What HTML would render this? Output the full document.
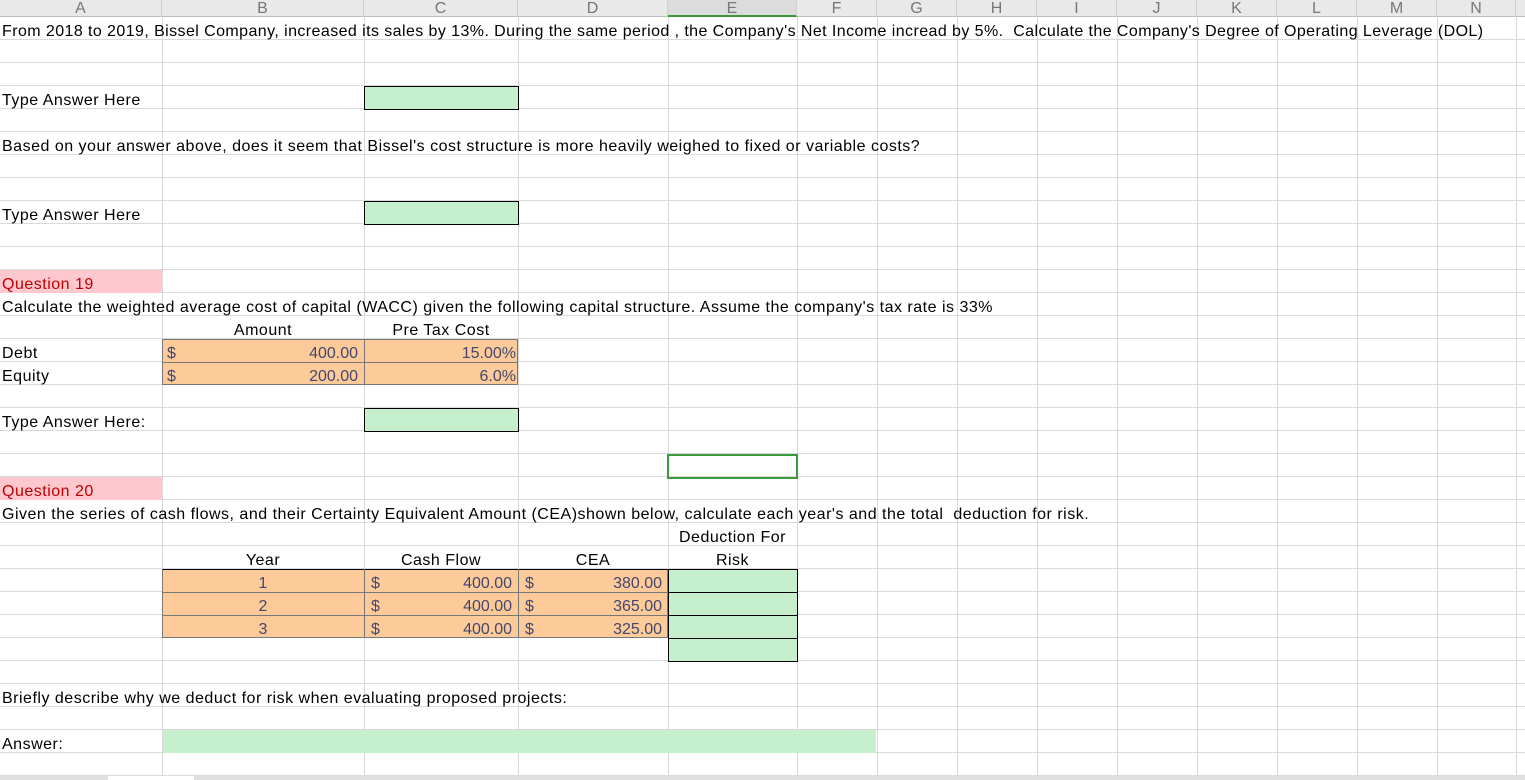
<!DOCTYPE html>
<html><head><meta charset="utf-8"><style>
*{margin:0;padding:0;box-sizing:border-box}
body{width:1525px;height:780px;overflow:hidden;background:#fff;position:relative;font-family:"Liberation Sans",sans-serif;color:#000}
.hdr{position:absolute;left:0;top:0;width:1525px;height:17px;background:#e9e9e9;border-bottom:1px solid #bdbdbd}
.hl{position:absolute;top:0;height:17px;text-align:center;font-size:16px;line-height:17px;color:#777;border-right:1px solid #cfcfcf}
.grid{position:absolute;left:0;top:17px;width:1525px;height:759px;background:repeating-linear-gradient(to bottom,transparent 0,transparent 22px,#d9d9d9 22px,#d9d9d9 23px)}
.v{position:absolute;top:17px;width:1px;height:759px;background:#d9d9d9}
.c{position:absolute;height:23px;line-height:25px;font-size:16px;white-space:nowrap;letter-spacing:0.5px}
.box{position:absolute}
.g{background:#c6efce}
.o{background:#fccb99}
.p{background:#ffc7ce}
.n{color:#44466e;font-size:16px;letter-spacing:0}
.b{border:1px solid #000}
</style></head><body>
<div class="grid"></div>
<div class="v" style="left:162px"></div><div class="v" style="left:364px"></div><div class="v" style="left:518px"></div><div class="v" style="left:668px"></div><div class="v" style="left:797px"></div><div class="v" style="left:877px"></div><div class="v" style="left:957px"></div><div class="v" style="left:1037px"></div><div class="v" style="left:1117px"></div><div class="v" style="left:1197px"></div><div class="v" style="left:1277px"></div><div class="v" style="left:1357px"></div><div class="v" style="left:1437px"></div><div class="v" style="left:1516px"></div>
<div class="hdr">
<div class="hl" style="left:0;width:162px">A</div><div class="hl" style="left:162px;width:202px">B</div><div class="hl" style="left:364px;width:154px">C</div><div class="hl" style="left:518px;width:150px">D</div><div class="hl" style="left:668px;width:129px;background:#dcdcdc;border-bottom:2px solid #3a9a3a">E</div><div class="hl" style="left:797px;width:80px">F</div><div class="hl" style="left:877px;width:80px">G</div><div class="hl" style="left:957px;width:80px">H</div><div class="hl" style="left:1037px;width:80px">I</div><div class="hl" style="left:1117px;width:80px">J</div><div class="hl" style="left:1197px;width:80px">K</div><div class="hl" style="left:1277px;width:80px">L</div><div class="hl" style="left:1357px;width:80px">M</div><div class="hl" style="left:1437px;width:79px">N</div>
</div>
<div class="c" style="left:2px;top:19px;font-size:16px;letter-spacing:0.42px">From 2018 to 2019, Bissel Company, increased its sales by 13%. During the same period , the Company's Net Income incread by 5%.&nbsp; Calculate the Company's Degree of Operating Leverage (DOL)</div>
<div class="c" style="left:2px;top:88px">Type Answer Here</div>
<div class="box g b" style="left:364px;top:86px;width:155px;height:24px"></div>
<div class="c" style="left:2px;top:134px">Based on your answer above, does it seem that Bissel's cost structure is more heavily weighed to fixed or variable costs?</div>
<div class="c" style="left:2px;top:203px">Type Answer Here</div>
<div class="box g b" style="left:364px;top:201px;width:155px;height:24px"></div>
<div class="box p" style="left:0;top:270px;width:162px;height:23px"></div>
<div class="c" style="left:2px;top:272px;color:#c00000">Question 19</div>
<div class="c" style="left:2px;top:295px">Calculate the weighted average cost of capital (WACC) given the following capital structure. Assume the company's tax rate is 33%</div>
<div class="c" style="left:162px;top:318px;width:202px;text-align:center">Amount</div>
<div class="c" style="left:364px;top:318px;width:154px;text-align:center">Pre Tax Cost</div>
<div class="box o" style="left:162px;top:339px;width:356px;height:46px;border:1px solid #777"></div>
<div class="box" style="left:162px;top:362px;width:356px;height:1px;background:#777"></div>
<div class="box" style="left:364px;top:339px;width:1px;height:46px;background:#777"></div>
<div class="c" style="left:2px;top:341px">Debt</div><div class="c" style="left:2px;top:364px">Equity</div>
<div class="c n" style="left:167px;top:341px">$</div><div class="c n" style="left:167px;top:364px">$</div>
<div class="c n" style="left:250px;top:341px;width:108px;text-align:right">400.00</div>
<div class="c n" style="left:250px;top:364px;width:108px;text-align:right">200.00</div>
<div class="c n" style="left:400px;top:341px;width:116px;text-align:right">15.00%</div>
<div class="c n" style="left:400px;top:364px;width:116px;text-align:right">6.0%</div>
<div class="c" style="left:2px;top:410px">Type Answer Here:</div>
<div class="box g b" style="left:364px;top:408px;width:155px;height:24px"></div>
<div class="box" style="left:667px;top:454px;width:131px;height:25px;border:2px solid #3a9a3a"></div>
<div class="box p" style="left:0;top:477px;width:162px;height:23px"></div>
<div class="c" style="left:2px;top:479px;color:#c00000">Question 20</div>
<div class="c" style="left:2px;top:502px">Given the series of cash flows, and their Certainty Equivalent Amount (CEA)shown below, calculate each year's and the total&nbsp; deduction for risk.</div>
<div class="c" style="left:668px;top:525px;width:129px;text-align:center">Deduction For</div>
<div class="c" style="left:162px;top:548px;width:202px;text-align:center">Year</div>
<div class="c" style="left:364px;top:548px;width:154px;text-align:center">Cash Flow</div>
<div class="c" style="left:518px;top:548px;width:150px;text-align:center">CEA</div>
<div class="c" style="left:668px;top:548px;width:129px;text-align:center">Risk</div>
<div class="box o" style="left:162px;top:569px;width:506px;height:69px;border:1px solid #777;border-top:1px solid #000"></div>
<div class="box" style="left:162px;top:592px;width:506px;height:1px;background:#777"></div>
<div class="box" style="left:162px;top:615px;width:506px;height:1px;background:#777"></div>
<div class="box" style="left:364px;top:569px;width:1px;height:69px;background:#777"></div>
<div class="box" style="left:518px;top:569px;width:1px;height:69px;background:#777"></div>
<div class="c n" style="left:162px;top:571px;width:202px;text-align:center">1</div>
<div class="c n" style="left:162px;top:594px;width:202px;text-align:center">2</div>
<div class="c n" style="left:162px;top:617px;width:202px;text-align:center">3</div>
<div class="c n" style="left:371px;top:571px">$</div><div class="c n" style="left:371px;top:594px">$</div><div class="c n" style="left:371px;top:617px">$</div>
<div class="c n" style="left:420px;top:571px;width:92px;text-align:right">400.00</div>
<div class="c n" style="left:420px;top:594px;width:92px;text-align:right">400.00</div>
<div class="c n" style="left:420px;top:617px;width:92px;text-align:right">400.00</div>
<div class="c n" style="left:525px;top:571px">$</div><div class="c n" style="left:525px;top:594px">$</div><div class="c n" style="left:525px;top:617px">$</div>
<div class="c n" style="left:560px;top:571px;width:102px;text-align:right">380.00</div>
<div class="c n" style="left:560px;top:594px;width:102px;text-align:right">365.00</div>
<div class="c n" style="left:560px;top:617px;width:102px;text-align:right">325.00</div>
<div class="box g b" style="left:668px;top:569px;width:130px;height:24px"></div>
<div class="box g b" style="left:668px;top:592px;width:130px;height:24px"></div>
<div class="box g b" style="left:668px;top:615px;width:130px;height:24px"></div>
<div class="box g b" style="left:668px;top:638px;width:130px;height:24px"></div>
<div class="c" style="left:2px;top:686px">Briefly describe why we deduct for risk when evaluating proposed projects:</div>
<div class="c" style="left:2px;top:732px">Answer:</div>
<div class="box g" style="left:163px;top:730px;width:713px;height:23px"></div>
<div class="box" style="left:0;top:776px;width:1525px;height:4px;background:#e0e0e0"></div>
<div class="box" style="left:108px;top:776px;width:86px;height:4px;background:#fff"></div>
</body></html>
